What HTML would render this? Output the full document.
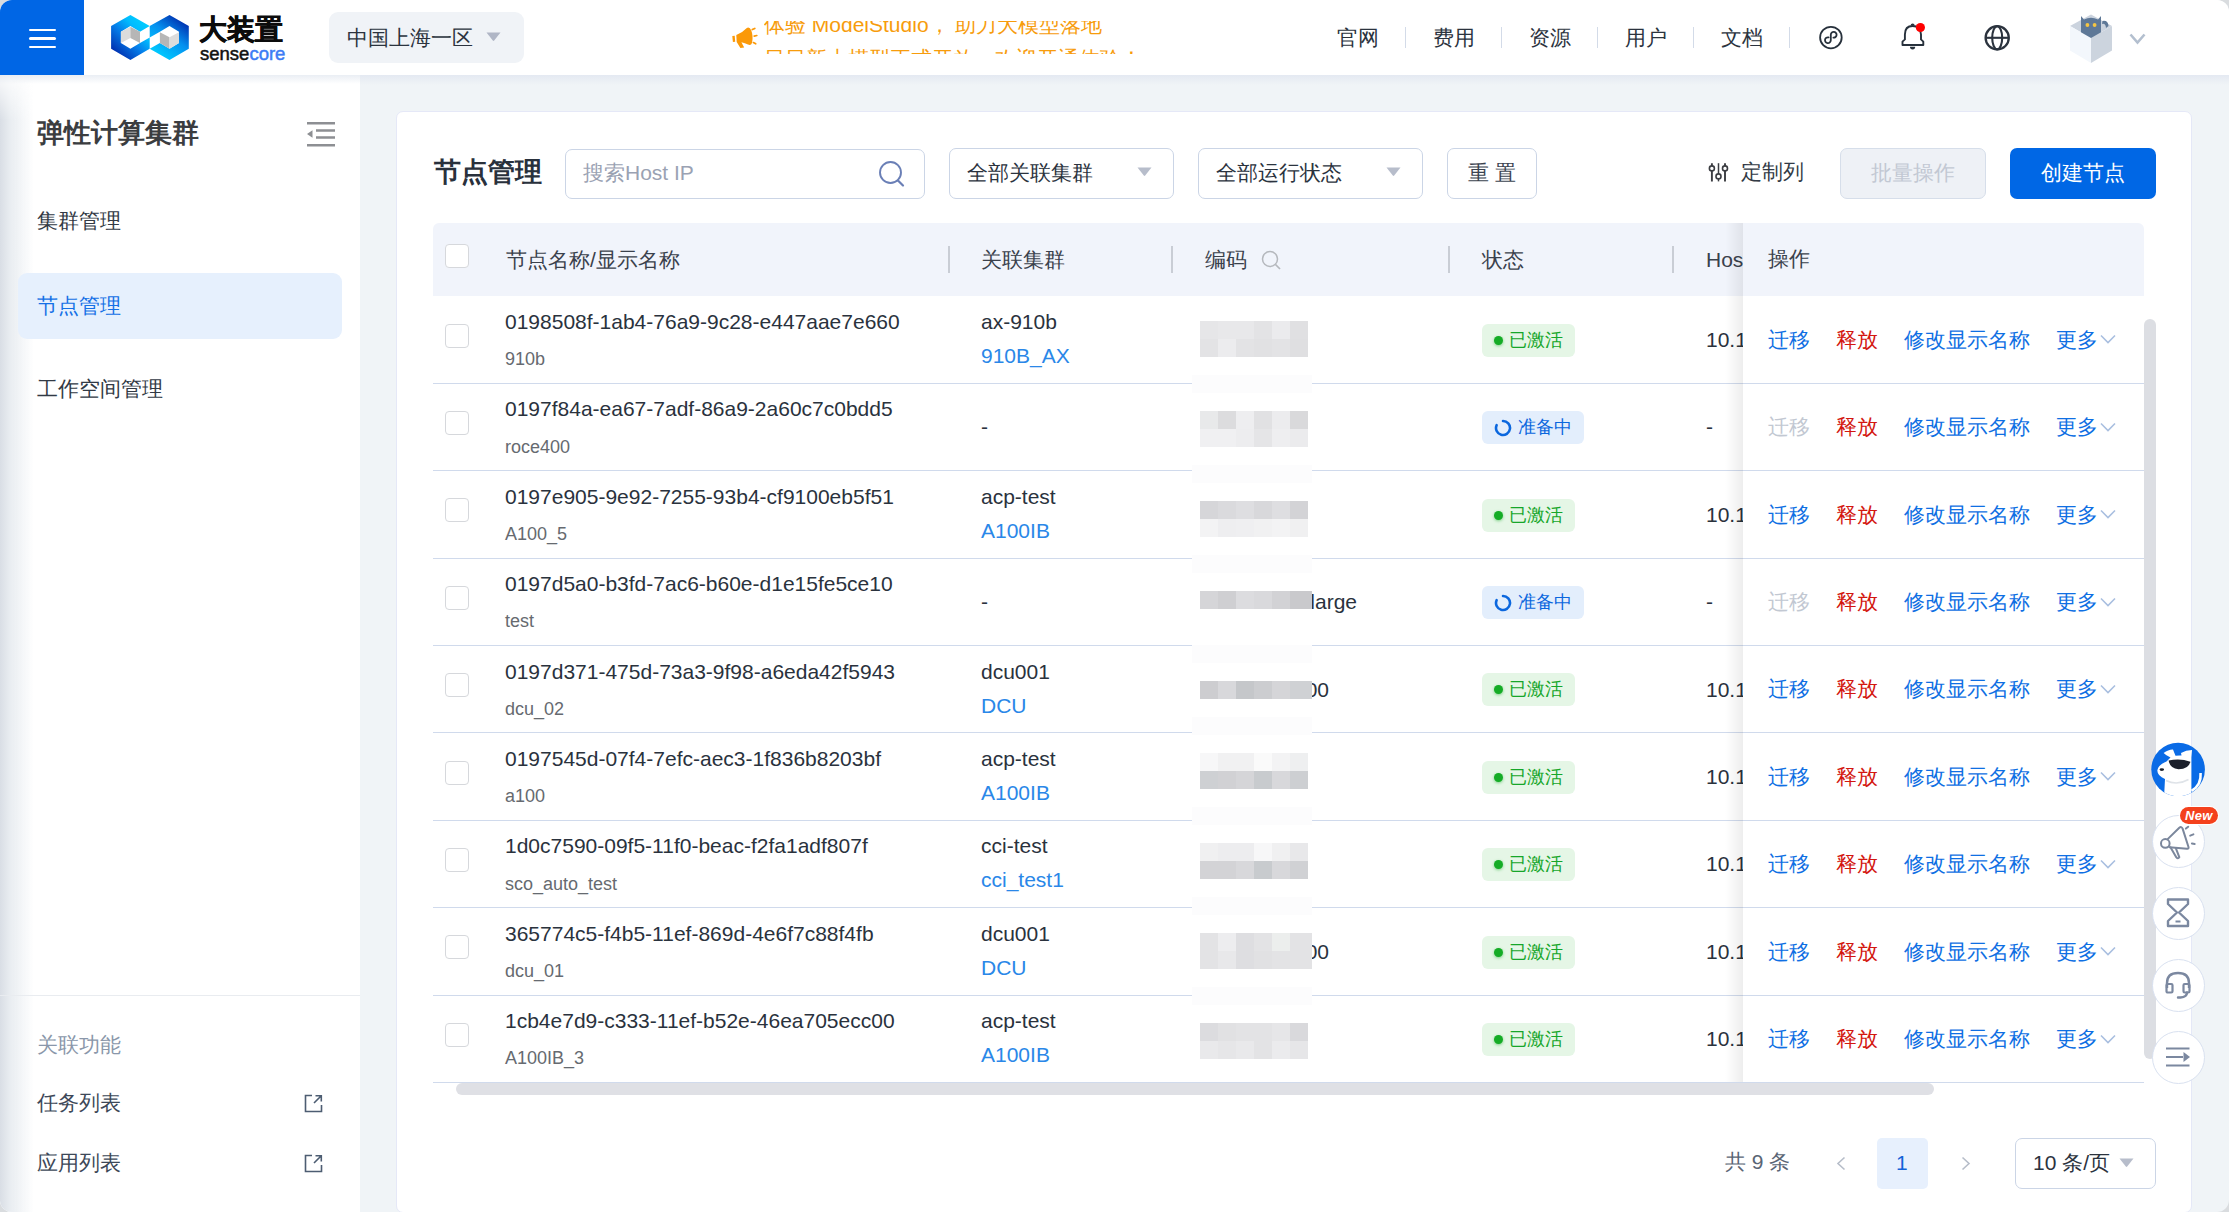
<!DOCTYPE html>
<html><head><meta charset="utf-8">
<style>
*{box-sizing:border-box;margin:0;padding:0}
html,body{width:2229px;height:1212px;overflow:hidden;background:#d9dcdf}
body{font-family:"Liberation Sans",sans-serif;position:relative}
.win{position:absolute;left:0;top:0;width:2229px;height:1212px;background:#f0f4f7;border-radius:12px;overflow:hidden}
.a{position:absolute;white-space:nowrap}
.f21{font-size:21px;line-height:30px}
.f18{font-size:18px;line-height:26px}
.dk{color:#2a323d}
.gy{color:#666a70}
.lk{color:#2a87e8}
.hd{color:#3a414c}
.op{color:#0f6fe3}
.dis{color:#c2c8d2}
.red{color:#d3170f}
/* header */
.hdr{position:absolute;left:0;top:0;width:2229px;height:75px;background:#fff}
.hdrsh{position:absolute;left:0;top:75px;width:2229px;height:10px;background:linear-gradient(#e4e9f2,rgba(240,243,247,0))}
.burger{position:absolute;left:0;top:0;width:84px;height:75px;background:#0066e5}
.burger i{position:absolute;left:29px;width:27px;height:2.6px;background:#fff;border-radius:2px}
.region{position:absolute;left:329px;top:12px;width:195px;height:51px;background:#f0f3f7;border-radius:9px}
.nav{position:absolute;top:23px;font-size:21px;line-height:30px;color:#2b333e}
.navsep{position:absolute;top:27px;width:1px;height:21px;background:#d3dbe8}
/* sidebar */
.side{position:absolute;left:0;top:75px;width:360px;height:1137px;background:#fff}
.sideshadow{position:absolute;left:0;top:75px;width:34px;height:1137px;background:linear-gradient(90deg,#d9dee5,#e9edf1 30%,rgba(255,255,255,0));-webkit-mask-image:linear-gradient(to bottom,rgba(0,0,0,0.15) 0,#000 45px)}
/* card */
.card{position:absolute;left:396px;top:111px;width:1796px;height:1102px;background:#fff;border:1px solid #e5e8f7;border-radius:7px}
.inp{position:absolute;background:#fff;border:1.5px solid #cbd5e6;border-radius:7px}
.th{position:absolute;left:433px;top:223px;width:1711px;height:73px;background:#f1f4fb;border-radius:6px 6px 0 0}
.thbg{background:#f1f4fb}
.thsep{position:absolute;top:246px;width:2px;height:27px;background:#c9cdd5}
.cb{position:absolute;width:24px;height:24px;border:1.5px solid #d6d8dc;border-radius:4px;background:#fff}
.rline{position:absolute;left:433px;width:1711px;height:1px;background:#d0daec}
.rlinefix{height:1px;background:#d0daec}
.fixcol{background:#fff}
.fixshadow{background:linear-gradient(90deg,rgba(0,0,0,0),rgba(0,0,0,0.07))}
.badge{position:absolute;height:33px;border-radius:6px;font-size:18px;line-height:33px;padding-left:27px;white-space:nowrap}
.badge.ok{width:93px;background:#e5f6e6;color:#16a62a}
.badge.prep{width:102px;background:#e3eefc;color:#0b67de;padding-left:36px}
.dot{position:absolute;left:12px;top:12px;width:9px;height:9px;border-radius:50%;background:#15ac26;box-shadow:0 1px 3px rgba(21,172,38,.5)}
.spin{position:absolute;left:12px;top:7.5px}
.circ{position:absolute;left:2152px;width:53px;height:53px;border-radius:50%;background:#fff;border:1px solid #d9e1f0}
</style></head>
<body>
<div class="win">

<!-- ===== HEADER ===== -->
<div class="hdr"></div>
<div class="burger"><i style="top:28.5px"></i><i style="top:37px"></i><i style="top:45.5px"></i></div>

<!-- logo -->
<svg class="a" style="left:105px;top:10px" width="90" height="55" viewBox="105 10 90 55">
  <defs>
    <linearGradient id="lg1" gradientUnits="userSpaceOnUse" x1="150" y1="20" x2="114" y2="57"><stop offset="0" stop-color="#00d4ff"/><stop offset=".3" stop-color="#00bcff"/><stop offset=".55" stop-color="#057fea"/><stop offset="1" stop-color="#0020a4"/></linearGradient>
    <linearGradient id="lg2" gradientUnits="userSpaceOnUse" x1="186" y1="20" x2="160" y2="55"><stop offset="0" stop-color="#0026a8"/><stop offset=".5" stop-color="#0590ef"/><stop offset="1" stop-color="#00c8ff"/></linearGradient>
  </defs>
  <path d="M130.4 15 L149.7 26.1 L140 31.8 L130.4 26.1 L120.9 31.8 L120.9 43.1 L130.4 48.8 L140 43.1 L149.7 37.5 L149.7 48.8 L130.4 59.9 L111.1 48.8 L111.1 26.1 Z" fill="url(#lg1)"/>
  <path d="M169.5 15 L188.8 26.1 L188.8 48.8 L169.5 59.9 L149.7 48.8 L159.9 43.1 L169.5 48.8 L179 43.1 L179 31.8 L169.5 26.1 L159.9 31.8 L149.7 37.5 L149.7 26.1 Z" fill="url(#lg2)"/>
  <path d="M120.9 31.8 L130.4 26.8 L130.4 37.9 L120.9 43.1 Z" fill="#dcdcdc"/>
  <path d="M130.4 26.8 L140 31.8 L140 43.1 L130.4 37.9 Z" fill="#b6b6b6"/>
  <path d="M159.9 32.2 L169.5 37.2 L169.5 48.8 L159.9 43.1 Z" fill="#b6b6b6"/>
  <path d="M169.5 37.2 L179 32.2 L179 43.1 L169.5 48.8 Z" fill="#dcdcdc"/>
</svg>
<div class="a" style="left:199px;top:13px;font-size:28px;line-height:34px;font-weight:bold;color:#0c0c0c;-webkit-text-stroke:0.6px #0c0c0c">大装置</div>
<div class="a" style="left:200px;top:42.5px;font-size:18.5px;line-height:22px;color:#111;-webkit-text-stroke:0.5px #111">sense<span style="color:#3d7cf5;-webkit-text-stroke:0.5px #3d7cf5">core</span></div>

<!-- region -->
<div class="region"></div>
<div class="a" style="left:347px;top:23px;font-size:21px;line-height:30px;color:#2b333e">中国上海一区</div>
<svg class="a" style="left:486px;top:32px" width="15" height="10" viewBox="0 0 15 10"><path d="M0.5 0.5 H14.5 L8.2 8.6 Q7.5 9.5 6.8 8.6 Z" fill="#b0b6c6"/></svg>

<!-- marquee -->
<svg class="a" style="left:725px;top:20px" width="40" height="35" viewBox="725 20 40 35">
  <path d="M732.3 36 L734.7 35.8 L735.2 41.7 L732.9 41.9 Z" fill="#fb9908"/>
  <path d="M736.3 35 Q742 33 746.5 28.2 Q749.5 26.3 751.3 30.5 Q753.4 36 752.1 42.8 Q751 45.9 748 44.6 Q745 43 741.4 42.3 L744.2 47.6 L740.4 47.9 L736.7 42 Z" fill="#fb9908"/>
  <path d="M752.3 29.6 L754.8 28.4 M754.2 36.1 L756.8 35.5 M753.4 42.6 L755.7 43.8" stroke="#fb9908" stroke-width="1.7" stroke-linecap="round"/>
</svg>
<div class="a" style="left:764px;top:20.8px;width:400px;height:33.1px;overflow:hidden">
  <div class="a" style="left:0;top:-10.6px;font-size:21px;line-height:30px;color:#f79c0c">体验 ModelStudio， 助力大模型落地</div>
  <div class="a" style="left:0;top:23.2px;font-size:21px;line-height:30px;color:#f79c0c">日日新大模型正式开放，欢迎开通体验！</div>
</div>

<!-- nav -->
<div class="nav" style="left:1337px">官网</div><div class="navsep" style="left:1405px"></div>
<div class="nav" style="left:1433px">费用</div><div class="navsep" style="left:1501px"></div>
<div class="nav" style="left:1529px">资源</div><div class="navsep" style="left:1597px"></div>
<div class="nav" style="left:1625px">用户</div><div class="navsep" style="left:1693px"></div>
<div class="nav" style="left:1721px">文档</div><div class="navsep" style="left:1789px"></div>
<!-- miniprogram icon -->
<svg class="a" style="left:1815px;top:22px" width="32" height="32" viewBox="1815 22 32 32">
  <circle cx="1830.9" cy="37.6" r="10.8" fill="none" stroke="#27313c" stroke-width="1.8"/>
  <path d="M1828.6 37.4 A2.9 2.9 0 1 0 1830.8 40.3 L1830.8 34.7 A2.9 2.9 0 1 1 1833.4 37.6" fill="none" stroke="#27313c" stroke-width="1.8" stroke-linecap="round"/>
</svg>
<!-- bell -->
<svg class="a" style="left:1896px;top:18px" width="32" height="36" viewBox="1896 18 32 36">
  <path d="M1904.9 39.4 V34.5 Q1904.9 26 1912.6 26 Q1920.8 26 1921 34.5 V39.4 L1923.3 41.6 V45 H1902.5 V41.6 Z" fill="none" stroke="#27313c" stroke-width="1.9" stroke-linejoin="round"/>
  <path d="M1910.6 25.5 A2 2 0 0 1 1914.6 25.5 Z" fill="#27313c"/>
  <path d="M1910 46.8 A2.6 2.6 0 0 0 1915.2 46.8 Z" fill="#27313c"/>
  <circle cx="1920.4" cy="27.5" r="4.6" fill="#ff0000"/>
</svg>
<!-- globe -->
<svg class="a" style="left:1983px;top:24px" width="29" height="29" viewBox="0 0 29 29">
  <circle cx="14.2" cy="13.8" r="11.6" fill="none" stroke="#2b333e" stroke-width="2.3"/>
  <ellipse cx="14.2" cy="13.8" rx="5" ry="11.6" fill="none" stroke="#2b333e" stroke-width="2.1"/>
  <path d="M2.6 13.8 H25.8" stroke="#2b333e" stroke-width="2.1"/>
</svg>
<!-- avatar -->
<svg class="a" style="left:2070px;top:13px" width="44" height="50" viewBox="0 0 44 50">
  <path d="M0 13 L21 1.5 L42 13 L21 25 Z" fill="#cbd3de"/>
  <path d="M11 3 L14 6.5 Q21 3 28 6.5 L31 3 L31 22 L21 37.5 L11 22 Z" fill="#5e7897"/>
  <circle cx="17.4" cy="12" r="1.9" fill="#f5c542"/><circle cx="24.6" cy="12" r="1.9" fill="#f5c542"/>
  <path d="M32.5 8 Q38 7 38.5 13 L36 15 Q35.5 10 32 11 Z" fill="#5e7897"/>
  <path d="M0 13 L21 25 L21 50 L0 37.5 Z" fill="#f3f7fc"/>
  <path d="M42 13 L21 25 L21 50 L42 37.5 Z" fill="#ccd4de"/>
</svg>
<svg class="a" style="left:2129px;top:33px" width="17" height="12" viewBox="0 0 17 12"><path d="M1.5 1.5 L8.5 9.5 L15.5 1.5" fill="none" stroke="#b3bfcf" stroke-width="2.6"/></svg>

<div class="hdrsh"></div>

<!-- ===== SIDEBAR ===== -->
<div class="side"></div>
<div class="a" style="left:0;top:75px;width:360px;height:9px;background:linear-gradient(#eaeef4,rgba(255,255,255,0))"></div>
<div class="sideshadow"></div>
<div class="a" style="left:37px;top:117.5px;font-size:27px;line-height:30px;font-weight:bold;color:#3b3d40">弹性计算集群</div>
<svg class="a" style="left:306px;top:122px" width="30" height="25" viewBox="0 0 30 25">
  <path d="M1 1.2 H29 M10 8.5 H29 M10 15.5 H29 M1 23.2 H29" stroke="#8d8f93" stroke-width="2.4"/>
  <path d="M1 12 L6.5 8.2 L6.5 15.8 Z" fill="#8d8f93"/>
</svg>
<div class="a" style="left:37px;top:206px;font-size:21px;line-height:30px;color:#323a45">集群管理</div>
<div class="a" style="left:18px;top:273px;width:324px;height:66px;background:#e6f0fd;border-radius:9px"></div>
<div class="a" style="left:37px;top:290.5px;font-size:21px;line-height:30px;color:#1570e6">节点管理</div>
<div class="a" style="left:37px;top:374px;font-size:21px;line-height:30px;color:#323a45">工作空间管理</div>
<div class="a" style="left:0;top:995px;width:360px;height:1px;background:#e9ecf0"></div>
<div class="a" style="left:37px;top:1030px;font-size:21px;line-height:30px;color:#8a97aa">关联功能</div>
<div class="a" style="left:37px;top:1088px;font-size:21px;line-height:30px;color:#3d4858">任务列表</div>
<div class="a" style="left:37px;top:1148px;font-size:21px;line-height:30px;color:#3d4858">应用列表</div>
<svg class="a" style="left:304px;top:1094px" width="19" height="19" viewBox="0 0 19 19"><path d="M8 1.5 H1.5 V17.5 H17.5 V11" fill="none" stroke="#4d5d72" stroke-width="1.6"/><path d="M10 9 L17 2 M11.5 1.8 H17.3 V7.5" fill="none" stroke="#4d5d72" stroke-width="1.6"/></svg>
<svg class="a" style="left:304px;top:1154px" width="19" height="19" viewBox="0 0 19 19"><path d="M8 1.5 H1.5 V17.5 H17.5 V11" fill="none" stroke="#4d5d72" stroke-width="1.6"/><path d="M10 9 L17 2 M11.5 1.8 H17.3 V7.5" fill="none" stroke="#4d5d72" stroke-width="1.6"/></svg>

<!-- ===== CARD ===== -->
<div class="card"></div>
<div class="a" style="left:434px;top:156px;font-size:27px;line-height:32px;font-weight:bold;color:#29313c">节点管理</div>

<div class="inp" style="left:565px;top:149px;width:360px;height:50px"></div>
<div class="a" style="left:583px;top:158px;font-size:21px;line-height:30px;color:#9aa2b3">搜索Host IP</div>
<svg class="a" style="left:877px;top:159px" width="30" height="30" viewBox="0 0 30 30"><circle cx="13.5" cy="13.5" r="10.5" fill="none" stroke="#6a7fb6" stroke-width="1.9"/><path d="M21 21.5 L26 26.5" stroke="#6a7fb6" stroke-width="2.2" stroke-linecap="round"/></svg>

<div class="inp" style="left:949px;top:148px;width:225px;height:51px"></div>
<div class="a" style="left:967px;top:158px;font-size:21px;line-height:30px;color:#2b333e">全部关联集群</div>
<svg class="a" style="left:1137px;top:167px" width="15" height="10" viewBox="0 0 15 10"><path d="M0.5 0.5 H14.5 L8.2 8.6 Q7.5 9.5 6.8 8.6 Z" fill="#b7bdcb"/></svg>

<div class="inp" style="left:1198px;top:148px;width:225px;height:51px"></div>
<div class="a" style="left:1216px;top:158px;font-size:21px;line-height:30px;color:#2b333e">全部运行状态</div>
<svg class="a" style="left:1386px;top:167px" width="15" height="10" viewBox="0 0 15 10"><path d="M0.5 0.5 H14.5 L8.2 8.6 Q7.5 9.5 6.8 8.6 Z" fill="#b7bdcb"/></svg>

<div class="inp" style="left:1447px;top:148px;width:90px;height:51px"></div>
<div class="a" style="left:1468px;top:158px;font-size:21px;line-height:30px;color:#3b4350">重 置</div>

<svg class="a" style="left:1707px;top:161px" width="24" height="23" viewBox="0 0 24 23">
  <path d="M4.9 2.2 V20.4 M18 2.2 V20.4" stroke="#3b3d42" stroke-width="1.9"/>
  <path d="M11.5 2.2 V20.4" stroke="#3b3d42" stroke-width="1.5"/>
  <circle cx="4.9" cy="7.4" r="2.5" fill="#fff" stroke="#3b3d42" stroke-width="1.6"/>
  <circle cx="11.5" cy="15.4" r="2.5" fill="#fff" stroke="#3b3d42" stroke-width="1.6"/>
  <circle cx="18" cy="7.4" r="2.5" fill="#fff" stroke="#3b3d42" stroke-width="1.6"/>
</svg>
<div class="a" style="left:1741px;top:157px;font-size:21px;line-height:30px;color:#323a45">定制列</div>

<div class="a" style="left:1840px;top:148px;width:146px;height:51px;background:#eef1f6;border:1.5px solid #d6deea;border-radius:7px"></div>
<div class="a" style="left:1871px;top:158px;font-size:21px;line-height:30px;color:#c2c8d3">批量操作</div>
<div class="a" style="left:2010px;top:148px;width:146px;height:51px;background:#0067e5;border-radius:7px"></div>
<div class="a" style="left:2041px;top:158px;font-size:21px;line-height:30px;color:#fff">创建节点</div>

<!-- table header -->
<div class="th"></div>
<div class="cb" style="left:445px;top:244px"></div>
<div class="a f21 hd" style="left:506px;top:245px">节点名称/显示名称</div>
<div class="thsep" style="left:948px"></div>
<div class="a f21 hd" style="left:981px;top:245px">关联集群</div>
<div class="thsep" style="left:1171px"></div>
<div class="a f21 hd" style="left:1205px;top:245px">编码</div>
<svg class="a" style="left:1261px;top:250px" width="21" height="21" viewBox="0 0 21 21"><circle cx="9" cy="9" r="7.5" fill="none" stroke="#b5b8bd" stroke-width="1.5"/><path d="M14.5 14.5 L19 19" stroke="#b5b8bd" stroke-width="1.7"/></svg>
<div class="thsep" style="left:1448px"></div>
<div class="a f21 hd" style="left:1482px;top:245px">状态</div>
<div class="thsep" style="left:1672px"></div>
<div class="a f21 hd" style="left:1706px;top:245px">Host IP</div>

<!-- rows -->
<div class="rline" style="top:383px"></div>
<div class="cb" style="left:445px;top:323.50px"></div>
<div class="a f21 dk" style="left:505px;top:306.90px;">0198508f-1ab4-76a9-9c28-e447aae7e660</div>
<div class="a f18 gy" style="left:505px;top:346.10px;">910b</div>
<div class="a f21 dk" style="left:981px;top:306.90px;">ax-910b</div>
<div class="a f21 lk" style="left:981px;top:340.90px;">910B_AX</div>
<div class="a f21 dk" style="left:1706px;top:324.90px;">10.1</div>
<div class="badge ok" style="left:1482px;top:323.80px"><i class="dot"></i>已激活</div>
<div class="rline" style="top:470px"></div>
<div class="cb" style="left:445px;top:410.90px"></div>
<div class="a f21 dk" style="left:505px;top:394.30px;">0197f84a-ea67-7adf-86a9-2a60c7c0bdd5</div>
<div class="a f18 gy" style="left:505px;top:433.50px;">roce400</div>
<div class="a f21 dk" style="left:981px;top:412.30px;">-</div>
<div class="a f21 dk" style="left:1706px;top:412.30px;">-</div>
<div class="badge prep" style="left:1482px;top:411.20px"><svg class="spin" width="18" height="18" viewBox="0 0 18 18"><path d="M9 2 A7 7 0 1 1 2.6 6.2" fill="none" stroke="#0b67de" stroke-width="2.6" stroke-linecap="round"/></svg>准备中</div>
<div class="rline" style="top:558px"></div>
<div class="cb" style="left:445px;top:498.30px"></div>
<div class="a f21 dk" style="left:505px;top:481.70px;">0197e905-9e92-7255-93b4-cf9100eb5f51</div>
<div class="a f18 gy" style="left:505px;top:520.90px;">A100_5</div>
<div class="a f21 dk" style="left:981px;top:481.70px;">acp-test</div>
<div class="a f21 lk" style="left:981px;top:515.70px;">A100IB</div>
<div class="a f21 dk" style="left:1706px;top:499.70px;">10.1</div>
<div class="badge ok" style="left:1482px;top:498.60px"><i class="dot"></i>已激活</div>
<div class="rline" style="top:645px"></div>
<div class="cb" style="left:445px;top:585.70px"></div>
<div class="a f21 dk" style="left:505px;top:569.10px;">0197d5a0-b3fd-7ac6-b60e-d1e15fe5ce10</div>
<div class="a f18 gy" style="left:505px;top:608.30px;">test</div>
<div class="a f21 dk" style="left:981px;top:587.10px;">-</div>
<div class="a f21 dk" style="left:1706px;top:587.10px;">-</div>
<div class="a f21 dk" style="left:1310.3px;top:587.10px;">large</div>
<div class="badge prep" style="left:1482px;top:586.00px"><svg class="spin" width="18" height="18" viewBox="0 0 18 18"><path d="M9 2 A7 7 0 1 1 2.6 6.2" fill="none" stroke="#0b67de" stroke-width="2.6" stroke-linecap="round"/></svg>准备中</div>
<div class="rline" style="top:732px"></div>
<div class="cb" style="left:445px;top:673.10px"></div>
<div class="a f21 dk" style="left:505px;top:656.50px;">0197d371-475d-73a3-9f98-a6eda42f5943</div>
<div class="a f18 gy" style="left:505px;top:695.70px;">dcu_02</div>
<div class="a f21 dk" style="left:981px;top:656.50px;">dcu001</div>
<div class="a f21 lk" style="left:981px;top:690.50px;">DCU</div>
<div class="a f21 dk" style="left:1706px;top:674.50px;">10.1</div>
<div class="a f21 dk" style="left:1305.7px;top:674.50px;">00</div>
<div class="badge ok" style="left:1482px;top:673.40px"><i class="dot"></i>已激活</div>
<div class="rline" style="top:820px"></div>
<div class="cb" style="left:445px;top:760.50px"></div>
<div class="a f21 dk" style="left:505px;top:743.90px;">0197545d-07f4-7efc-aec3-1f836b8203bf</div>
<div class="a f18 gy" style="left:505px;top:783.10px;">a100</div>
<div class="a f21 dk" style="left:981px;top:743.90px;">acp-test</div>
<div class="a f21 lk" style="left:981px;top:777.90px;">A100IB</div>
<div class="a f21 dk" style="left:1706px;top:761.90px;">10.1</div>
<div class="badge ok" style="left:1482px;top:760.80px"><i class="dot"></i>已激活</div>
<div class="rline" style="top:907px"></div>
<div class="cb" style="left:445px;top:847.90px"></div>
<div class="a f21 dk" style="left:505px;top:831.30px;">1d0c7590-09f5-11f0-beac-f2fa1adf807f</div>
<div class="a f18 gy" style="left:505px;top:870.50px;">sco_auto_test</div>
<div class="a f21 dk" style="left:981px;top:831.30px;">cci-test</div>
<div class="a f21 lk" style="left:981px;top:865.30px;">cci_test1</div>
<div class="a f21 dk" style="left:1706px;top:849.30px;">10.1</div>
<div class="badge ok" style="left:1482px;top:848.20px"><i class="dot"></i>已激活</div>
<div class="rline" style="top:995px"></div>
<div class="cb" style="left:445px;top:935.30px"></div>
<div class="a f21 dk" style="left:505px;top:918.70px;">365774c5-f4b5-11ef-869d-4e6f7c88f4fb</div>
<div class="a f18 gy" style="left:505px;top:957.90px;">dcu_01</div>
<div class="a f21 dk" style="left:981px;top:918.70px;">dcu001</div>
<div class="a f21 lk" style="left:981px;top:952.70px;">DCU</div>
<div class="a f21 dk" style="left:1706px;top:936.70px;">10.1</div>
<div class="a f21 dk" style="left:1305.7px;top:936.70px;">00</div>
<div class="badge ok" style="left:1482px;top:935.60px"><i class="dot"></i>已激活</div>
<div class="rline" style="top:1082px"></div>
<div class="cb" style="left:445px;top:1022.70px"></div>
<div class="a f21 dk" style="left:505px;top:1006.10px;">1cb4e7d9-c333-11ef-b52e-46ea705ecc00</div>
<div class="a f18 gy" style="left:505px;top:1045.30px;">A100IB_3</div>
<div class="a f21 dk" style="left:981px;top:1006.10px;">acp-test</div>
<div class="a f21 lk" style="left:981px;top:1040.10px;">A100IB</div>
<div class="a f21 dk" style="left:1706px;top:1024.10px;">10.1</div>
<div class="badge ok" style="left:1482px;top:1023.00px"><i class="dot"></i>已激活</div>
<div class="a" style="left:1192px;top:375px;width:120px;height:18px;background:#fcfcfd"></div>
<div class="a" style="left:1200px;top:321px;width:18px;height:18px;background:#e6e6e8"></div>
<div class="a" style="left:1218px;top:321px;width:18px;height:18px;background:#e8e8ea"></div>
<div class="a" style="left:1236px;top:321px;width:18px;height:18px;background:#e8e8ea"></div>
<div class="a" style="left:1254px;top:321px;width:18px;height:18px;background:#e3e3e5"></div>
<div class="a" style="left:1272px;top:321px;width:18px;height:18px;background:#ebebed"></div>
<div class="a" style="left:1290px;top:321px;width:18px;height:18px;background:#e0e0e2"></div>
<div class="a" style="left:1200px;top:339px;width:18px;height:18px;background:#e3e3e5"></div>
<div class="a" style="left:1218px;top:339px;width:18px;height:18px;background:#ececee"></div>
<div class="a" style="left:1236px;top:339px;width:18px;height:18px;background:#e3e3e5"></div>
<div class="a" style="left:1254px;top:339px;width:18px;height:18px;background:#e1e1e3"></div>
<div class="a" style="left:1272px;top:339px;width:18px;height:18px;background:#e3e3e5"></div>
<div class="a" style="left:1290px;top:339px;width:18px;height:18px;background:#dfdfe1"></div>
<div class="a" style="left:1192px;top:465px;width:120px;height:18px;background:#fcfcfd"></div>
<div class="a" style="left:1200px;top:411px;width:18px;height:18px;background:#e8e9ea"></div>
<div class="a" style="left:1218px;top:411px;width:18px;height:18px;background:#dcdcde"></div>
<div class="a" style="left:1236px;top:411px;width:18px;height:18px;background:#eeeef0"></div>
<div class="a" style="left:1254px;top:411px;width:18px;height:18px;background:#e1e1e3"></div>
<div class="a" style="left:1272px;top:411px;width:18px;height:18px;background:#ececee"></div>
<div class="a" style="left:1290px;top:411px;width:18px;height:18px;background:#d9d9db"></div>
<div class="a" style="left:1200px;top:429px;width:18px;height:18px;background:#f0f0f2"></div>
<div class="a" style="left:1218px;top:429px;width:18px;height:18px;background:#f0f0f2"></div>
<div class="a" style="left:1236px;top:429px;width:18px;height:18px;background:#ededef"></div>
<div class="a" style="left:1254px;top:429px;width:18px;height:18px;background:#e5e5e7"></div>
<div class="a" style="left:1272px;top:429px;width:18px;height:18px;background:#eeeef0"></div>
<div class="a" style="left:1290px;top:429px;width:18px;height:18px;background:#ebebed"></div>
<div class="a" style="left:1192px;top:555px;width:120px;height:18px;background:#fcfcfd"></div>
<div class="a" style="left:1200px;top:501px;width:18px;height:18px;background:#d6d6d9"></div>
<div class="a" style="left:1218px;top:501px;width:18px;height:18px;background:#dadadd"></div>
<div class="a" style="left:1236px;top:501px;width:18px;height:18px;background:#dedee1"></div>
<div class="a" style="left:1254px;top:501px;width:18px;height:18px;background:#d8d8db"></div>
<div class="a" style="left:1272px;top:501px;width:18px;height:18px;background:#dedee1"></div>
<div class="a" style="left:1290px;top:501px;width:18px;height:18px;background:#d3d3d6"></div>
<div class="a" style="left:1200px;top:519px;width:18px;height:18px;background:#f3f3f4"></div>
<div class="a" style="left:1218px;top:519px;width:18px;height:18px;background:#eeeef0"></div>
<div class="a" style="left:1236px;top:519px;width:18px;height:18px;background:#efeff1"></div>
<div class="a" style="left:1254px;top:519px;width:18px;height:18px;background:#f1f1f2"></div>
<div class="a" style="left:1272px;top:519px;width:18px;height:18px;background:#f3f3f4"></div>
<div class="a" style="left:1290px;top:519px;width:18px;height:18px;background:#f0f0f1"></div>
<div class="a" style="left:1192px;top:645px;width:120px;height:18px;background:#fcfcfd"></div>
<div class="a" style="left:1200px;top:591px;width:18px;height:18px;background:#d5d5d8"></div>
<div class="a" style="left:1218px;top:591px;width:18px;height:18px;background:#cfcfd2"></div>
<div class="a" style="left:1236px;top:591px;width:18px;height:18px;background:#dcdcdf"></div>
<div class="a" style="left:1254px;top:591px;width:18px;height:18px;background:#d9d9dc"></div>
<div class="a" style="left:1272px;top:591px;width:18px;height:18px;background:#d2d2d5"></div>
<div class="a" style="left:1290px;top:591px;width:22px;height:18px;background:#c9c9cc"></div>
<div class="a" style="left:1192px;top:717px;width:120px;height:18px;background:#fcfcfd"></div>
<div class="a" style="left:1200px;top:681px;width:18px;height:18px;background:#cdcdd0"></div>
<div class="a" style="left:1218px;top:681px;width:18px;height:18px;background:#d8d8db"></div>
<div class="a" style="left:1236px;top:681px;width:18px;height:18px;background:#c5c7ca"></div>
<div class="a" style="left:1254px;top:681px;width:18px;height:18px;background:#cccdd0"></div>
<div class="a" style="left:1272px;top:681px;width:18px;height:18px;background:#d5d5d8"></div>
<div class="a" style="left:1290px;top:681px;width:22px;height:18px;background:#cfd1d4"></div>
<div class="a" style="left:1192px;top:807px;width:120px;height:18px;background:#fcfcfd"></div>
<div class="a" style="left:1200px;top:753px;width:18px;height:18px;background:#f7f7f8"></div>
<div class="a" style="left:1218px;top:753px;width:18px;height:18px;background:#f1f1f2"></div>
<div class="a" style="left:1236px;top:753px;width:18px;height:18px;background:#f1f1f2"></div>
<div class="a" style="left:1254px;top:753px;width:18px;height:18px;background:#fafafa"></div>
<div class="a" style="left:1272px;top:753px;width:18px;height:18px;background:#f3f3f4"></div>
<div class="a" style="left:1290px;top:753px;width:18px;height:18px;background:#eeeff0"></div>
<div class="a" style="left:1200px;top:771px;width:18px;height:18px;background:#ced0d3"></div>
<div class="a" style="left:1218px;top:771px;width:18px;height:18px;background:#d1d1d4"></div>
<div class="a" style="left:1236px;top:771px;width:18px;height:18px;background:#d5d5d8"></div>
<div class="a" style="left:1254px;top:771px;width:18px;height:18px;background:#c8cbce"></div>
<div class="a" style="left:1272px;top:771px;width:18px;height:18px;background:#d8d8db"></div>
<div class="a" style="left:1290px;top:771px;width:18px;height:18px;background:#cdcfd2"></div>
<div class="a" style="left:1192px;top:897px;width:120px;height:18px;background:#fcfcfd"></div>
<div class="a" style="left:1200px;top:843px;width:18px;height:18px;background:#f0f0f1"></div>
<div class="a" style="left:1218px;top:843px;width:18px;height:18px;background:#ededef"></div>
<div class="a" style="left:1236px;top:843px;width:18px;height:18px;background:#ededef"></div>
<div class="a" style="left:1254px;top:843px;width:18px;height:18px;background:#f7f7f8"></div>
<div class="a" style="left:1272px;top:843px;width:18px;height:18px;background:#f0f0f1"></div>
<div class="a" style="left:1290px;top:843px;width:18px;height:18px;background:#e8e8ea"></div>
<div class="a" style="left:1200px;top:861px;width:18px;height:18px;background:#d3d3d6"></div>
<div class="a" style="left:1218px;top:861px;width:18px;height:18px;background:#d3d3d6"></div>
<div class="a" style="left:1236px;top:861px;width:18px;height:18px;background:#d8d8db"></div>
<div class="a" style="left:1254px;top:861px;width:18px;height:18px;background:#c8cbce"></div>
<div class="a" style="left:1272px;top:861px;width:18px;height:18px;background:#d8d8db"></div>
<div class="a" style="left:1290px;top:861px;width:18px;height:18px;background:#d0d1d4"></div>
<div class="a" style="left:1192px;top:987px;width:120px;height:18px;background:#fcfcfd"></div>
<div class="a" style="left:1200px;top:933px;width:18px;height:18px;background:#e3e3e5"></div>
<div class="a" style="left:1218px;top:933px;width:18px;height:18px;background:#ededef"></div>
<div class="a" style="left:1236px;top:933px;width:18px;height:18px;background:#dedee1"></div>
<div class="a" style="left:1254px;top:933px;width:18px;height:18px;background:#e3e3e5"></div>
<div class="a" style="left:1272px;top:933px;width:18px;height:18px;background:#eceeed"></div>
<div class="a" style="left:1290px;top:933px;width:22px;height:18px;background:#e3e3e5"></div>
<div class="a" style="left:1200px;top:951px;width:18px;height:18px;background:#e3e3e5"></div>
<div class="a" style="left:1218px;top:951px;width:18px;height:18px;background:#e8e8ea"></div>
<div class="a" style="left:1236px;top:951px;width:18px;height:18px;background:#dedee1"></div>
<div class="a" style="left:1254px;top:951px;width:18px;height:18px;background:#e1e1e3"></div>
<div class="a" style="left:1272px;top:951px;width:18px;height:18px;background:#e3e3e5"></div>
<div class="a" style="left:1290px;top:951px;width:22px;height:18px;background:#e3e3e5"></div>
<div class="a" style="left:1200px;top:1023px;width:18px;height:18px;background:#dcdcdf"></div>
<div class="a" style="left:1218px;top:1023px;width:18px;height:18px;background:#e1e1e3"></div>
<div class="a" style="left:1236px;top:1023px;width:18px;height:18px;background:#e3e3e5"></div>
<div class="a" style="left:1254px;top:1023px;width:18px;height:18px;background:#e3e3e5"></div>
<div class="a" style="left:1272px;top:1023px;width:18px;height:18px;background:#e6e6e8"></div>
<div class="a" style="left:1290px;top:1023px;width:18px;height:18px;background:#d9d9dc"></div>
<div class="a" style="left:1200px;top:1041px;width:18px;height:18px;background:#e9e9eb"></div>
<div class="a" style="left:1218px;top:1041px;width:18px;height:18px;background:#e6e6e8"></div>
<div class="a" style="left:1236px;top:1041px;width:18px;height:18px;background:#e9e9eb"></div>
<div class="a" style="left:1254px;top:1041px;width:18px;height:18px;background:#e3e3e5"></div>
<div class="a" style="left:1272px;top:1041px;width:18px;height:18px;background:#ebebed"></div>
<div class="a" style="left:1290px;top:1041px;width:18px;height:18px;background:#e6e6e8"></div>

<!-- fixed column -->
<div class="a fixcol" style="left:1743px;top:223px;width:401px;height:859.50px"></div>
<div class="a fixshadow" style="left:1725px;top:223px;width:18px;height:859px"></div>
<div class="a thbg" style="left:1743px;top:223px;width:401px;height:73px;border-top-right-radius:6px"></div>
<div class="a f21 hd" style="left:1768px;top:245px;line-height:28px">操作</div>
<div class="a rlinefix" style="left:1743px;top:383px;width:401px"></div>
<div class="a f21 op" style="left:1768px;top:324.70px;">迁移</div>
<div class="a f21 red" style="left:1836px;top:324.70px;">释放</div>
<div class="a f21 op" style="left:1904px;top:324.70px;">修改显示名称</div>
<div class="a f21 op" style="left:2056px;top:324.70px;">更多</div>
<svg class="a" style="left:2100px;top:334.40px" width="16" height="10" viewBox="0 0 16 10"><path d="M1 1.5 L8 8.5 L15 1.5" fill="none" stroke="#a9bfe0" stroke-width="1.6"/></svg>
<div class="a rlinefix" style="left:1743px;top:470px;width:401px"></div>
<div class="a f21 dis" style="left:1768px;top:412.10px;">迁移</div>
<div class="a f21 red" style="left:1836px;top:412.10px;">释放</div>
<div class="a f21 op" style="left:1904px;top:412.10px;">修改显示名称</div>
<div class="a f21 op" style="left:2056px;top:412.10px;">更多</div>
<svg class="a" style="left:2100px;top:421.80px" width="16" height="10" viewBox="0 0 16 10"><path d="M1 1.5 L8 8.5 L15 1.5" fill="none" stroke="#a9bfe0" stroke-width="1.6"/></svg>
<div class="a rlinefix" style="left:1743px;top:558px;width:401px"></div>
<div class="a f21 op" style="left:1768px;top:499.50px;">迁移</div>
<div class="a f21 red" style="left:1836px;top:499.50px;">释放</div>
<div class="a f21 op" style="left:1904px;top:499.50px;">修改显示名称</div>
<div class="a f21 op" style="left:2056px;top:499.50px;">更多</div>
<svg class="a" style="left:2100px;top:509.20px" width="16" height="10" viewBox="0 0 16 10"><path d="M1 1.5 L8 8.5 L15 1.5" fill="none" stroke="#a9bfe0" stroke-width="1.6"/></svg>
<div class="a rlinefix" style="left:1743px;top:645px;width:401px"></div>
<div class="a f21 dis" style="left:1768px;top:586.90px;">迁移</div>
<div class="a f21 red" style="left:1836px;top:586.90px;">释放</div>
<div class="a f21 op" style="left:1904px;top:586.90px;">修改显示名称</div>
<div class="a f21 op" style="left:2056px;top:586.90px;">更多</div>
<svg class="a" style="left:2100px;top:596.60px" width="16" height="10" viewBox="0 0 16 10"><path d="M1 1.5 L8 8.5 L15 1.5" fill="none" stroke="#a9bfe0" stroke-width="1.6"/></svg>
<div class="a rlinefix" style="left:1743px;top:732px;width:401px"></div>
<div class="a f21 op" style="left:1768px;top:674.30px;">迁移</div>
<div class="a f21 red" style="left:1836px;top:674.30px;">释放</div>
<div class="a f21 op" style="left:1904px;top:674.30px;">修改显示名称</div>
<div class="a f21 op" style="left:2056px;top:674.30px;">更多</div>
<svg class="a" style="left:2100px;top:684.00px" width="16" height="10" viewBox="0 0 16 10"><path d="M1 1.5 L8 8.5 L15 1.5" fill="none" stroke="#a9bfe0" stroke-width="1.6"/></svg>
<div class="a rlinefix" style="left:1743px;top:820px;width:401px"></div>
<div class="a f21 op" style="left:1768px;top:761.70px;">迁移</div>
<div class="a f21 red" style="left:1836px;top:761.70px;">释放</div>
<div class="a f21 op" style="left:1904px;top:761.70px;">修改显示名称</div>
<div class="a f21 op" style="left:2056px;top:761.70px;">更多</div>
<svg class="a" style="left:2100px;top:771.40px" width="16" height="10" viewBox="0 0 16 10"><path d="M1 1.5 L8 8.5 L15 1.5" fill="none" stroke="#a9bfe0" stroke-width="1.6"/></svg>
<div class="a rlinefix" style="left:1743px;top:907px;width:401px"></div>
<div class="a f21 op" style="left:1768px;top:849.10px;">迁移</div>
<div class="a f21 red" style="left:1836px;top:849.10px;">释放</div>
<div class="a f21 op" style="left:1904px;top:849.10px;">修改显示名称</div>
<div class="a f21 op" style="left:2056px;top:849.10px;">更多</div>
<svg class="a" style="left:2100px;top:858.80px" width="16" height="10" viewBox="0 0 16 10"><path d="M1 1.5 L8 8.5 L15 1.5" fill="none" stroke="#a9bfe0" stroke-width="1.6"/></svg>
<div class="a rlinefix" style="left:1743px;top:995px;width:401px"></div>
<div class="a f21 op" style="left:1768px;top:936.50px;">迁移</div>
<div class="a f21 red" style="left:1836px;top:936.50px;">释放</div>
<div class="a f21 op" style="left:1904px;top:936.50px;">修改显示名称</div>
<div class="a f21 op" style="left:2056px;top:936.50px;">更多</div>
<svg class="a" style="left:2100px;top:946.20px" width="16" height="10" viewBox="0 0 16 10"><path d="M1 1.5 L8 8.5 L15 1.5" fill="none" stroke="#a9bfe0" stroke-width="1.6"/></svg>
<div class="a rlinefix" style="left:1743px;top:1082px;width:401px"></div>
<div class="a f21 op" style="left:1768px;top:1023.90px;">迁移</div>
<div class="a f21 red" style="left:1836px;top:1023.90px;">释放</div>
<div class="a f21 op" style="left:1904px;top:1023.90px;">修改显示名称</div>
<div class="a f21 op" style="left:2056px;top:1023.90px;">更多</div>
<svg class="a" style="left:2100px;top:1033.60px" width="16" height="10" viewBox="0 0 16 10"><path d="M1 1.5 L8 8.5 L15 1.5" fill="none" stroke="#a9bfe0" stroke-width="1.6"/></svg>

<!-- scrollbars -->
<div class="a" style="left:2144px;top:319px;width:12px;height:740px;background:#dcdee3;border-radius:6px"></div>
<div class="a" style="left:456px;top:1083px;width:1478px;height:12px;background:#dfe0e5;border-radius:6px"></div>

<!-- pagination -->
<div class="a" style="left:1725px;top:1147px;font-size:21px;line-height:30px;color:#5a6575">共 9 条</div>
<svg class="a" style="left:1834px;top:1155px" width="14" height="17" viewBox="0 0 14 17"><path d="M10.5 2.5 L4 8.5 L10.5 14.5" fill="none" stroke="#b6bdc9" stroke-width="1.6"/></svg>
<div class="a" style="left:1877px;top:1138px;width:51px;height:51px;background:#e7f0fd;border-radius:5px"></div>
<div class="a" style="left:1896px;top:1148px;font-size:21px;line-height:30px;color:#1463d8">1</div>
<svg class="a" style="left:1959px;top:1155px" width="14" height="17" viewBox="0 0 14 17"><path d="M3.5 2.5 L10 8.5 L3.5 14.5" fill="none" stroke="#b6bdc9" stroke-width="1.6"/></svg>
<div class="inp" style="left:2015px;top:1138px;width:141px;height:51px"></div>
<div class="a" style="left:2033px;top:1148px;font-size:21px;line-height:30px;color:#2b333e">10 条/页</div>
<svg class="a" style="left:2119px;top:1158px" width="15" height="10" viewBox="0 0 15 10"><path d="M0.5 0.5 H14.5 L8.2 8.6 Q7.5 9.5 6.8 8.6 Z" fill="#b7bdcb"/></svg>

<!-- floating tools -->
<svg class="a" style="left:2151px;top:742px" width="54" height="54" viewBox="2151 742 54 54">
  <defs><clipPath id="cc"><circle cx="2178.1" cy="769.5" r="26.8"/></clipPath></defs>
  <circle cx="2178.1" cy="769.5" r="26.8" fill="#0a6be6"/>
  <g clip-path="url(#cc)">
    <path d="M2164 798 L2165 779 Q2157.5 776 2157.3 770.5 Q2158 765 2166.5 761.5 L2170.5 757.5 Q2166 755.5 2163.6 753 Q2168.5 749.2 2173 749.4 L2175.5 755.8 Q2178.5 755.2 2181.5 755.5 L2181 753 Q2186 750.2 2192 750 L2191.4 757.5 L2191.4 798 Z" fill="#fff"/>
    <path d="M2168.6 760.6 Q2180 757.8 2190.4 761.8 Q2188.5 769.3 2178.5 769.2 Q2170 768.5 2168.6 760.6 Z" fill="#1b1f2a"/>
    <ellipse cx="2161.8" cy="769.6" rx="2.3" ry="1.3" fill="#1b1f2a"/>
    <path d="M2166 780.5 Q2177 786 2188.5 779.5" fill="none" stroke="#dfe3e8" stroke-width="1.6"/>
    <path d="M2200.6 773 Q2201.5 785.5 2191.5 790.8" fill="none" stroke="#fff" stroke-width="2.6"/>
  </g>
</svg>
<div class="circ" style="top:815px"></div>
<svg class="a" style="left:2150px;top:815px" width="56" height="54" viewBox="2150 815 56 54">
  <g fill="none" stroke="#7b879c" stroke-width="2" stroke-linecap="round" stroke-linejoin="round">
    <circle cx="2165.3" cy="843.4" r="4.3"/>
    <path d="M2167.4 839.4 L2179.3 827.8 Q2181.4 826 2182.6 828.6 L2188.5 847 Q2189 849 2187 848.8 L2169.4 847.2"/>
    <path d="M2170.6 847.4 L2176.4 857.4 Q2178 859.2 2179.3 857.2 L2175.9 848.3"/>
    <path d="M2185.9 828.6 L2188.2 826.7 M2190.2 835.6 L2193.4 834.4 M2191.9 843.4 L2194.7 844"/>
  </g>
</svg>
<div class="a" style="left:2180px;top:807px;width:37.5px;height:17px;background:#f4411d;border-radius:9px;box-shadow:0 0 0 1px #fff"></div>
<div class="a" style="left:2185px;top:806.5px;font-size:13px;line-height:18px;font-weight:bold;font-style:italic;color:#fff;letter-spacing:0.3px">New</div>
<div class="circ" style="top:887px"></div>
<svg class="a" style="left:2166px;top:898px" width="24" height="30" viewBox="0 0 24 30">
  <path d="M2 1.5 H22 V6 L13 14.5 L22 23 V28 H2 V23 L11 14.5 L2 6 Z" fill="none" stroke="#7b88a0" stroke-width="2.4" stroke-linejoin="round"/>
  <path d="M9.5 23.5 H14.5" stroke="#7b88a0" stroke-width="2"/>
</svg>
<div class="circ" style="top:959px"></div>
<svg class="a" style="left:2165px;top:971px" width="26" height="30" viewBox="0 0 26 30">
  <path d="M2 17 V12 Q2 2 13 2 Q24 2 24 12 V17" fill="none" stroke="#7b88a0" stroke-width="2.4"/>
  <rect x="1.5" y="13" width="6" height="8.5" rx="1.2" fill="none" stroke="#7b88a0" stroke-width="2.2"/>
  <rect x="18.5" y="13" width="6" height="8.5" rx="1.2" fill="none" stroke="#7b88a0" stroke-width="2.2"/>
  <path d="M22 21.5 Q22 26 15.5 26.5 H13" fill="none" stroke="#7b88a0" stroke-width="2.4" stroke-linecap="round"/>
</svg>
<div class="circ" style="top:1031px"></div>
<svg class="a" style="left:2165px;top:1047px" width="26" height="20" viewBox="0 0 26 20">
  <path d="M1 1.5 H24.5 M1 10 H18 M1 18.5 H24.5" stroke="#7b88a0" stroke-width="2.2"/>
  <path d="M18.5 5 L25 10 L18.5 15 Z" fill="#7b88a0"/>
</svg>

</div>
</body></html>
